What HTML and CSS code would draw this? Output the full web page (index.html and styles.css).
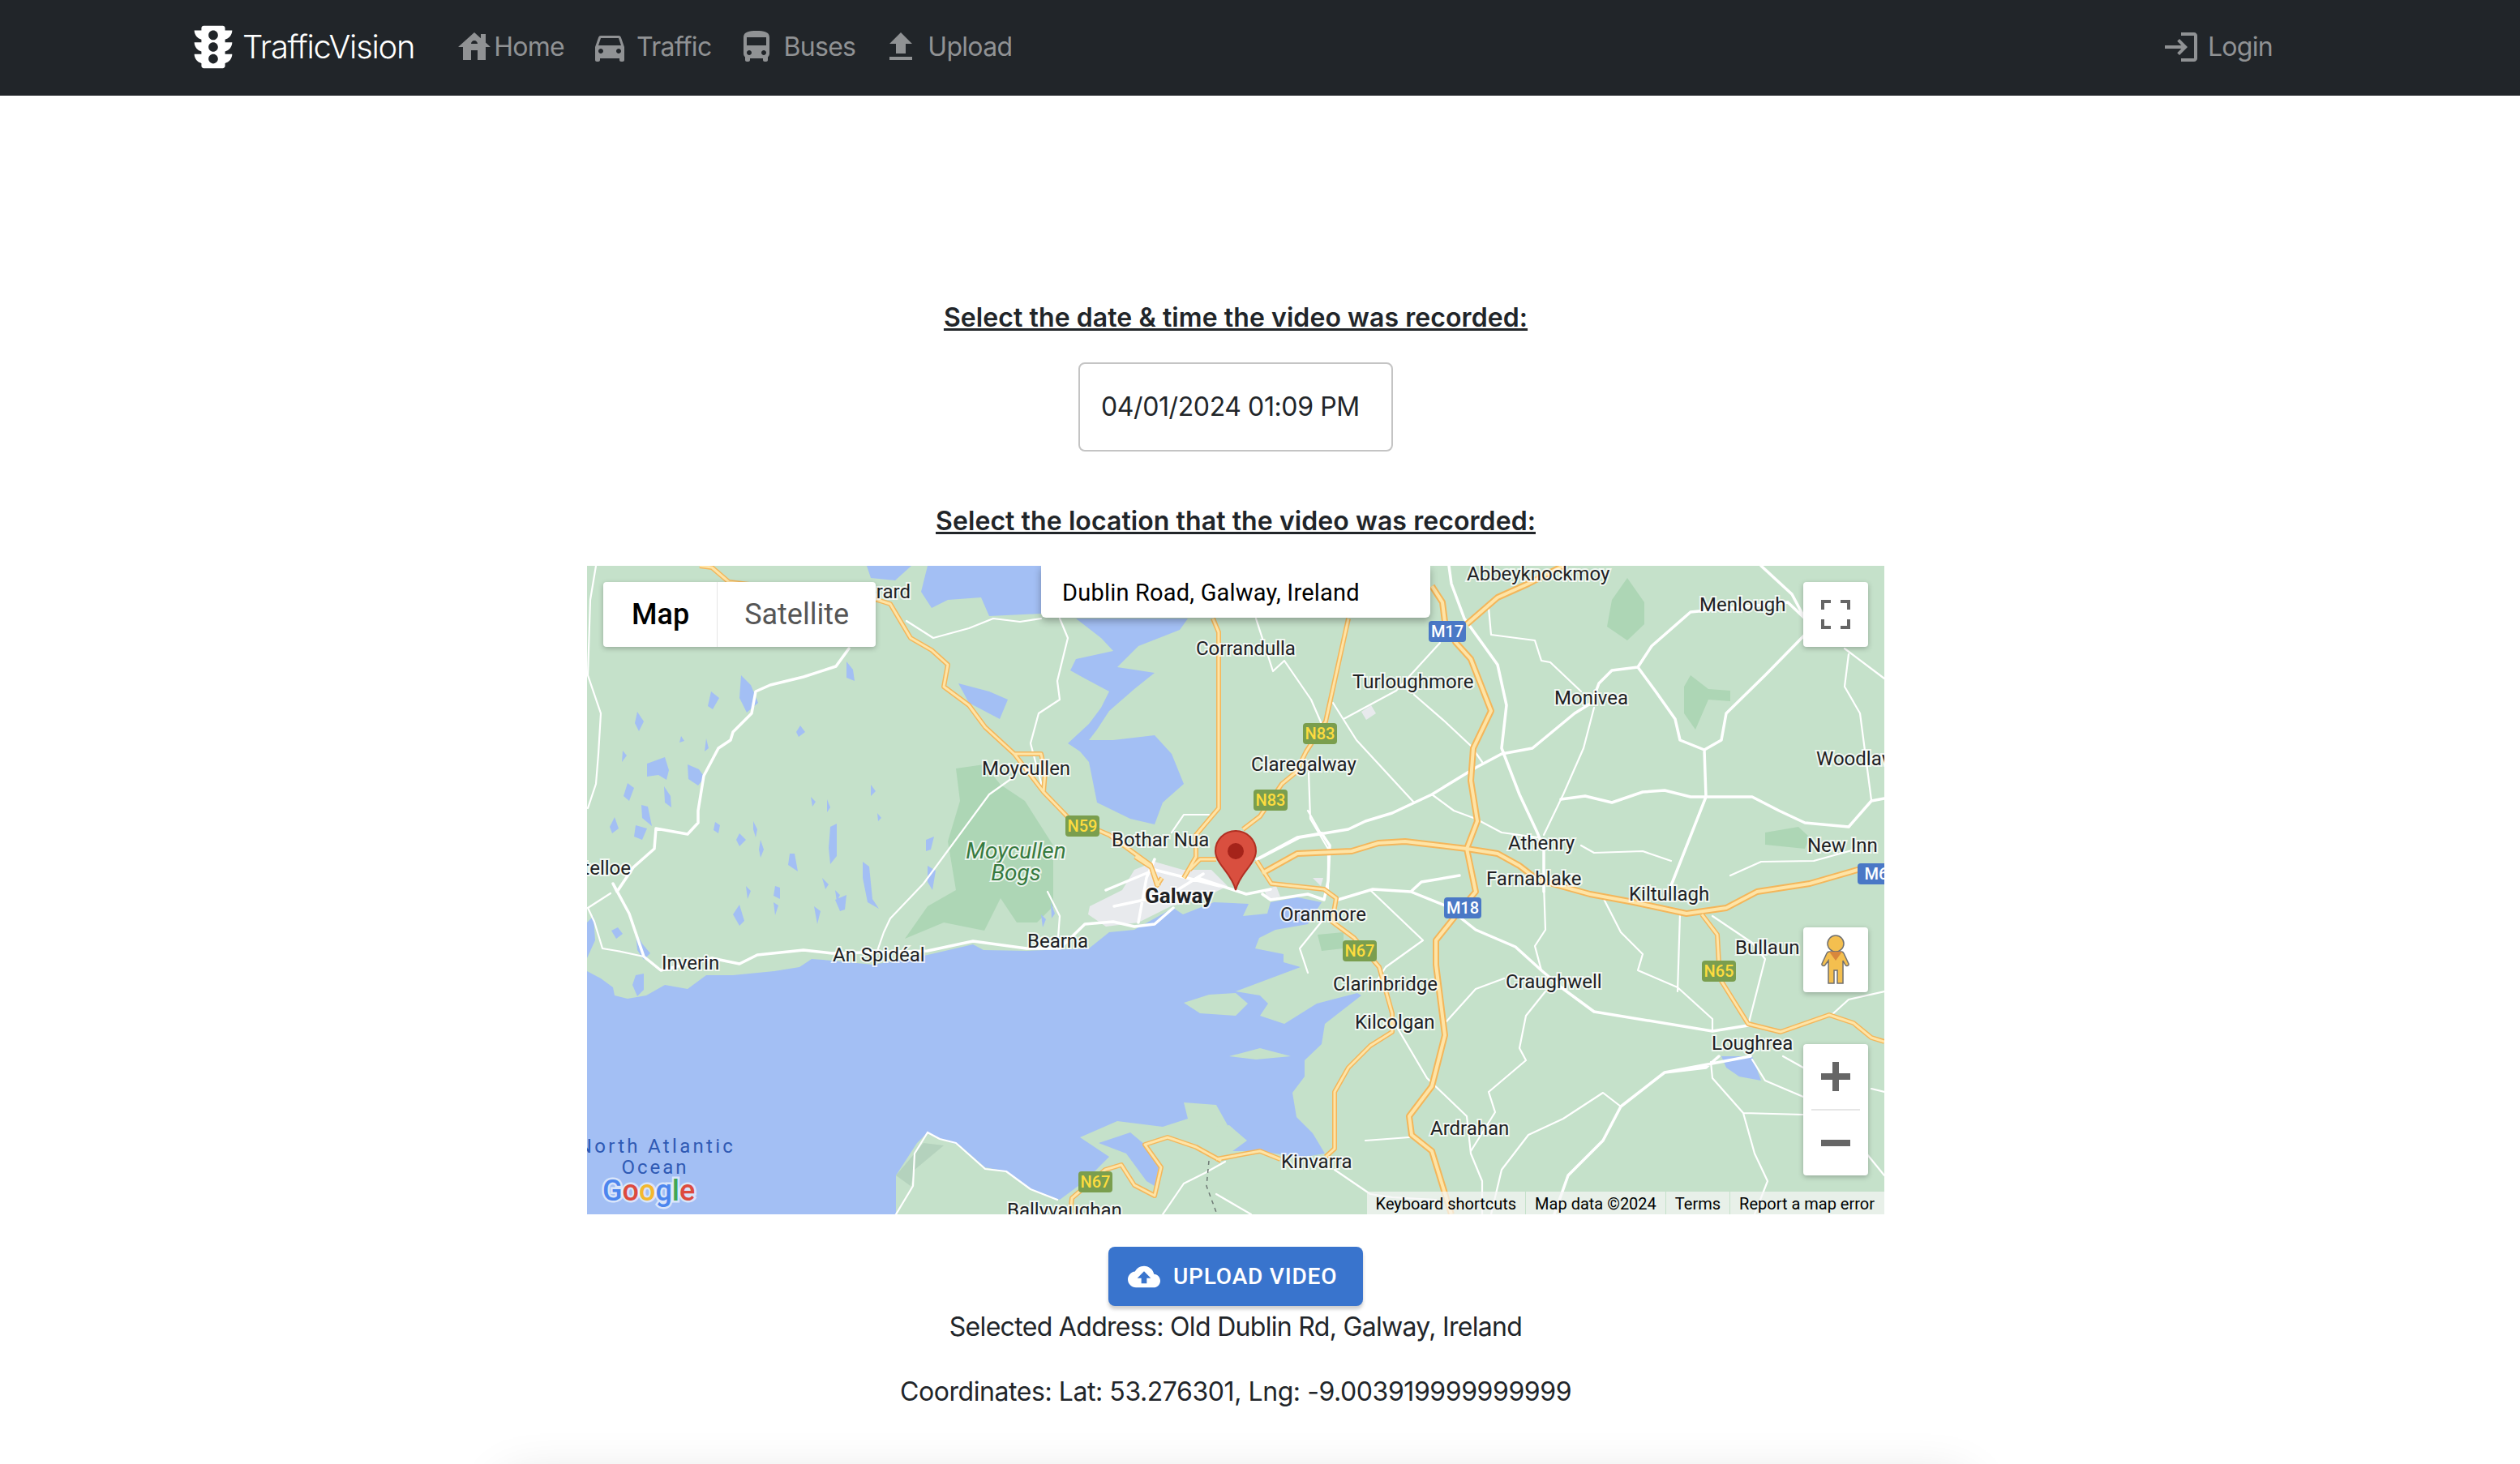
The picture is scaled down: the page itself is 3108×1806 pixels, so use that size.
FILE: index.html
```html
<!DOCTYPE html>
<html lang="en">

<head>
    <meta charset="UTF-8">
    <meta name="viewport" content="width=device-width, initial-scale=1.0">
    <title>TrafficVision</title>
    <link rel="stylesheet" href="styles.css">
</head>

<body>
    <nav class="navbar">
        <a class="brand">
            <svg class="brand-icon" viewBox="0 0 24 24"><path d="M20 10h-3V8.860c1.720-.45 3-2 3-3.860h-3V4c0-.55-.45-1-1-1H8c-.55 0-1 .45-1 1v1H4c0 1.860 1.280 3.410 3 3.860V10H4c0 1.860 1.280 3.410 3 3.860V15H4c0 1.860 1.280 3.410 3 3.860V20c0 .55.45 1 1 1h8c.55 0 1-.45 1-1v-1.140c1.720-.45 3-2 3-3.860h-3v-1.140c1.720-.45 3-2 3-3.860zm-8 9c-1.110 0-2-.9-2-2s.89-2 2-2c1.100 0 2 .9 2 2s-.89 2-2 2zm0-5c-1.110 0-2-.9-2-2s.89-2 2-2c1.100 0 2 .9 2 2s-.89 2-2 2zm0-5c-1.110 0-2-.9-2-2 0-1.110.89-2 2-2 1.100 0 2 .89 2 2 0 1.100-.89 2-2 2z"/></svg>
            <span>TrafficVision</span>
        </a>
        <div class="nav-links">
            <a class="nav-link nav-home">
                <svg class="nav-icon" viewBox="0 0 24 24"><path d="M19 9.300V4h-3v2.600L12 3 2 12h3v8h5v-6h4v6h5v-8h3l-3-2.700zm-9 .7c0-1.100.9-2 2-2s2 .9 2 2h-4z"/></svg>
                Home
            </a>
            <a class="nav-link">
                <svg class="nav-icon" viewBox="0 0 24 24"><path d="M18.920 6.010C18.720 5.420 18.160 5 17.500 5h-11c-.66 0-1.210.42-1.420 1.010L3 12v8c0 .55.45 1 1 1h1c.55 0 1-.45 1-1v-1h12v1c0 .55.45 1 1 1h1c.55 0 1-.45 1-1v-8l-2.080-5.990zM6.500 16c-.83 0-1.500-.67-1.500-1.500S5.670 13 6.500 13s1.500.67 1.500 1.500S7.330 16 6.500 16zm11 0c-.83 0-1.500-.67-1.500-1.500s.67-1.500 1.500-1.500 1.500.67 1.500 1.500-.67 1.500-1.500 1.500zM5 11l1.500-4.500h11L19 11H5z"/></svg>
                Traffic
            </a>
            <a class="nav-link">
                <svg class="nav-icon" viewBox="0 0 24 24"><path d="M4 16c0 .88.39 1.670 1 2.220V20c0 .55.45 1 1 1h1c.55 0 1-.45 1-1v-1h8v1c0 .55.45 1 1 1h1c.55 0 1-.45 1-1v-1.780c.61-.55 1-1.340 1-2.220V6c0-3.500-3.580-4-8-4s-8 .5-8 4v10zm3.500 1c-.83 0-1.500-.67-1.500-1.500S6.670 14 7.500 14s1.500.67 1.500 1.500S8.330 17 7.500 17zm9 0c-.83 0-1.500-.67-1.500-1.500s.67-1.500 1.500-1.500 1.500.67 1.500 1.500-.67 1.500-1.500 1.500zm1.500-6H6V6h12v5z"/></svg>
                Buses
            </a>
            <a class="nav-link">
                <svg class="nav-icon" viewBox="0 0 24 24"><path d="M9 16h6v-6h4l-7-7-7 7h4zm-4 2h14v2H5z"/></svg>
                Upload
            </a>
        </div>
        <a class="nav-link nav-login">
            <svg class="nav-icon" viewBox="0 0 24 24"><path d="M11 7 9.600 8.400l2.600 2.600H2v2h10.200l-2.600 2.600L11 17l5-5-5-5zm9 12h-8v2h8c1.100 0 2-.9 2-2V5c0-1.100-.9-2-2-2h-8v2h8v14z"/></svg>
            Login
        </a>
    </nav>

    <main class="content">
        <h2 class="section-title">Select the date &amp; time the video was recorded:</h2>
        <div class="date-box">04/01/2024 01:09 PM</div>
        <h2 class="section-title location-title">Select the location that the video was recorded:</h2>

        <div class="map">
            <svg class="map-canvas" viewBox="0 0 1600 800">
                <defs>
                    <path id="majorRoads" d="M1204 0L1161 22 1123 39 1085 72M1042 25L1055 45 1058 69 1071 94 1090 115 1115 179 1093 225 1090 265 1098 315 1085 349 1096 402 1071 432 1047 462 1047 492 1058 579 1042 642 1014 679 1017 702 1042 722 1066 800M833 379L876 355 943 352 976 342 1009 340 1085 349 1123 355 1150 370 1172 387 1237 405 1291 415 1356 429 1405 422 1443 402 1508 392 1567 375 1600 374"/>
                    <path id="minorRoads" d="M139 0L154 2 175 20 358 42 374 47 399 89 425 104 445 122 440 149 471 172 491 199 527 232 563 279 593 310 644 332 695 369 705 395M772 65L779 82 779 299 751 332 751 359 736 385M709 385L703 394 696 372 676 359M939 65L911 192 887 229 874 255 857 269 830 309 809 325M776 362L756 362 743 375M826 364L844 392 909 399 924 410 919 439 946 459 977 495 993 552 993 575 966 592 939 619 922 649 922 719 911 729M776 732L830 722 855 732M782 734L751 717 716 705 688 714 708 742 700 777 675 764 659 739 639 745 598 780 596 800M1375 430L1394 455 1397 509 1432 565 1472 575 1532 554 1562 564 1584 582 1600 587M527 232L560 232 565 255 563 279"/>
                </defs>

                <path class="sea" d="M0 500L17 509 32 520 34 530 50 534 73 530 96 517 124 522 147 505 180 505 231 500 262 495 277 485 302 487 353 492 420 480 476 467 489 474 542 475 619 472 644 452 675 449 723 422 735 430 773 415 816 417 809 432 839 429 843 415 876 409 906 415 889 442 849 449 829 459 824 472 859 479 859 489 880 495 840 510 800 525 830 530 840 540 830 555 860 565 900 540 950 527 955 530 910 565 906 590 885 610 885 630 870 650 875 680 895 700 910 725 880 730 830 722 795 722 782 712 790 690 776 665 736 662 741 682 710 692 654 685 608 705 644 729 614 759 583 782 547 769 517 747 491 742 460 715 435 707 420 699 407 712 381 752 381 800 0 800Z"/>
                <path class="land" d="M736 539L767 529 800 527 815 540 800 555 756 552ZM792 605L830 595 868 605 825 609ZM776 692L792 690 814 709 792 725 776 722Z"/>
                <path class="sea" d="M631 712L665 725 690 759 700 765 705 742 688 714 670 699Z"/>
                <path class="hill" d="M381 752L415 712 440 715 404 745 399 765Z"/>

                <path class="wetland" d="M455 250L490 245 510 270 540 290 575 345 575 420 555 440 530 440 510 410 490 450 440 440 392 460 420 420 455 400 445 340 460 290ZM1283 15L1304 45 1304 72 1283 92 1258 75 1264 42ZM1361 135L1383 152 1410 154 1410 167 1383 165 1367 202 1353 182 1353 149ZM1453 329L1494 322 1508 335 1502 349 1453 344ZM901 455L933 452 933 472 906 475Z"/>

                <path class="sea" d="M420 0L560 0 560 59 496 62 486 39 445 42 425 52 412 32ZM603 65L741 65 731 79 680 99 654 125 700 132 675 152 644 179 629 202 619 215 649 215 700 209 721 232 736 269 710 292 700 319 670 312 629 292 619 242 608 229 593 219 619 195 634 175 644 155 614 139 596 129 603 115 649 105 634 89ZM458 145L496 155 519 165 509 189 471 169ZM345 0L400 0 380 18 350 15ZM1399 605L1437 605 1448 635 1421 630 1405 619Z"/>
                <path class="sea" d="M190 135l12 12 9 22-14 12-9-18zM153 155l10 8-8 14-6-4zM62 180l8 12-6 12-5-10zM263 197l6 8-8 6-3-6zM320 118l8 10 2 14-10-4zM116 210l4 6-6 2zM147 213l3 12-5 4zM44 228l5 6-6 8zM74 244l22 -8 5 16-3 12-10-6-14 2zM124 245l14 6 7 10-8 10-12-8zM50 268l8 6-6 16-7-6zM95 272l8 12 1 14-8-6zM67 295l8 2 5 24-12-10zM34 310l5 14-8 6-3-8zM60 320l14 4-6 14-10-4zM158 316l6 4-2 10-6-4zM188 330l8 8-8 8-4-8zM214 338l4 12-4 10-2-10zM205 315l5 10-2 10-3-10zM300 322l8-4 0 40-8 10-2-20zM296 288l4 10-4 6zM276 285l6 6-4 6zM250 355l6 0 4 22-12-8zM340 365l8 6 4 40 8 12-14-8-6-30zM418 338l10-4-4 16-6 2zM420 370l10 6-4 24-6-10zM350 270l6 8-6 6zM358 305l5 6-4 4zM290 385l8 8-4 6zM306 400l6 6-4 8zM232 395l6 2 0 14-8-4zM196 395l6 6-4 10zM0 440l8-8 2 30-10 22zM30 450l8-4 6 8-8 6zM60 452l8 14 10 12-8 8-8-12zM180 430l8-12 6 20-6 6zM230 415l6 4-4 12zM280 420l8 6-4 16zM306 412l14-6-2 18-6 2zM560 430l6 6-4 10zM572 415l5 14-4 6zM60 505l10-2 0 20-8 8-6-14z"/>

                <path class="urban" d="M618 430L620 420 660 400 675 375 700 365 735 375 770 375 790 395 760 410 720 420 680 440 640 445ZM835 400L850 395 855 408 840 412ZM895 385L908 385 905 395ZM955 180L967 172 973 182 961 190Z"/>

                <g class="roads-white">
                    <path d="M11 0L4 42 1 135 17 182 14 232 11 269 1 299M394 68L427 89 471 77 501 65 534 69 560 65M583 65L593 89 580 142 583 165 557 182 547 219 555 249 563 279M527 260L496 282 415 392 374 435 366 452 358 475M568 402L583 432 580 472M721 329L736 307 767 307M70 482L37 475 19 472 9 439 1 422 29 404M420 699L404 725 402 765 381 800M710 800L736 762 762 749 787 735M825 65L846 130 860 117 893 165 906 195M920 169L949 215 1020 292M933 189L998 154 1052 95M1020 159L1058 192 1090 222 1104 242M890 255L892 312 914 349 914 402M1042 282L1069 302 1096 312 1128 329 1172 335M1226 345L1242 354 1302 352 1337 364M1410 382L1448 365 1513 364 1567 349M1112 52L1115 85 1169 92 1177 117 1188 119 1226 155M1242 175L1229 225 1204 282 1180 332M1556 109L1551 149 1570 182 1584 289M1551 102L1600 139M966 400L1031 462 985 495 966 525M1180 392L1182 449 1169 469 1177 499M1253 409L1275 452 1302 479 1296 499 1345 520 1388 559 1388 574M1348 429L1345 525M1388 432L1437 465 1453 485 1432 567M1535 554L1556 535 1600 525M1182 525L1158 555 1150 595 1158 610 1112 649 1120 674 1090 722M1131 509L1096 522 1060 562M993 559L1036 632 1085 679 1090 725 1104 759 1104 800M1275 667L1253 650 1204 682 1161 702 1128 745 1115 800M1386 612L1388 632 1426 675 1500 677M1437 609L1453 635 1500 655M1426 675L1440 725 1456 759 1440 800M776 775L819 800M922 745L966 775 993 779 1047 782M960 709L1014 705M1475 605L1500 619M1584 645L1600 649M1578 725L1600 752M420 699L435 707 455 712 491 744 517 747 547 769 580 782M889 302L906 332M909 435L879 472 889 502"/>
                </g>
                <g class="roads-white wide">
                    <path d="M323 102L307 124 267 137 226 147 208 155 203 182 180 205 177 215 162 225 144 259 137 302 137 317 124 331 85 324 83 349 57 372 37 402 32 392 52 429 70 482 91 499 154 484 188 491 210 480 267 474 302 478 420 475 476 463 542 472 583 472 614 442 649 439 675 445 700 442 723 422M1063 0L1066 22 1082 65 1123 122 1134 172 1128 225 1150 282 1172 329 1180 349 1180 402M1448 0L1486 35 1502 65 1481 45 1361 57 1313 99 1296 125 1264 129 1248 145 1239 169 1218 182 1166 225 1128 232 1096 249 1042 282 993 305 960 315 939 325 879 335 827 362M1296 125L1318 155 1342 189 1348 215 1378 227 1399 215 1405 182 1453 135 1502 85M1378 227L1380 285 1334 402M1201 288L1231 284 1264 292 1302 279 1329 277 1361 285 1380 285 1437 285 1470 302 1502 317 1556 322 1584 290 1600 287M926 412L969 399 1016 402 1058 419 1096 449 1145 470 1177 499 1204 522 1242 550 1388 574 1432 567M1435 605L1329 625 1275 667 1253 709 1210 752 1193 800M1329 625L1380 619 1396 605M753 385L813 405 843 399M826 362L876 335 906 330 916 345 914 389 909 412M1016 402L1029 390 1076 382M833 405L843 412 889 405 909 412M640 400L700 375 780 395M680 440L690 385 700 362M650 420L720 405 760 380"/>
                </g>

                <use href="#minorRoads" class="road-casing"/>
                <use href="#majorRoads" class="road-casing major"/>
                <use href="#minorRoads" class="road-fill"/>
                <use href="#majorRoads" class="road-fill major"/>
                <path class="ferry" d="M767 734L764 765 777 800"/>

                <g class="shield green">
                    <rect x="883" y="194" width="42" height="26" rx="4"/><text x="904" y="214">N83</text>
                    <rect x="822" y="276" width="42" height="26" rx="4"/><text x="843" y="296">N83</text>
                    <rect x="590" y="308" width="42" height="26" rx="4"/><text x="611" y="328">N59</text>
                    <rect x="932" y="462" width="42" height="26" rx="4"/><text x="953" y="482">N67</text>
                    <rect x="1375" y="487" width="42" height="26" rx="4"/><text x="1396" y="507">N65</text>
                    <rect x="606" y="747" width="42" height="26" rx="4"/><text x="627" y="767">N67</text>
                </g>
                <g class="shield blue">
                    <rect x="1038" y="68" width="46" height="26" rx="4"/><text x="1061" y="88">M17</text>
                    <rect x="1057" y="409" width="46" height="26" rx="4"/><text x="1080" y="429">M18</text>
                    <rect x="1567" y="367" width="46" height="26" rx="4"/><text x="1590" y="387">M6</text>
                </g>

                <g class="map-labels" transform="translate(0 1)">
                    <text x="1085" y="17">Abbeyknockmoy</text>
                    <text x="1372" y="55">Menlough</text>
                    <text x="944" y="150">Turloughmore</text>
                    <text x="1193" y="170">Monivea</text>
                    <text x="1516" y="245">Woodlawn</text>
                    <text x="819" y="252">Claregalway</text>
                    <text x="1136" y="349">Athenry</text>
                    <text x="1505" y="352">New Inn</text>
                    <text x="1109" y="393">Farnablake</text>
                    <text x="751" y="109">Corrandulla</text>
                    <text x="399" y="39" class="end">Oughterard</text>
                    <text x="487" y="257">Moycullen</text>
                    <text x="647" y="345">Bothar Nua</text>
                    <text x="54" y="380" class="end">Costelloe</text>
                    <text x="92" y="497">Inverin</text>
                    <text x="303" y="487">An Spidéal</text>
                    <text x="543" y="470">Bearna</text>
                    <text x="855" y="437">Oranmore</text>
                    <text x="920" y="523">Clarinbridge</text>
                    <text x="947" y="570">Kilcolgan</text>
                    <text x="1133" y="520">Craughwell</text>
                    <text x="1285" y="412">Kiltullagh</text>
                    <text x="1416" y="478">Bullaun</text>
                    <text x="1387" y="596">Loughrea</text>
                    <text x="1040" y="701">Ardrahan</text>
                    <text x="856" y="742">Kinvarra</text>
                    <text x="518" y="802">Ballyvaughan</text>
                    <text x="688" y="415" class="city">Galway</text>
                    <text x="529" y="360" class="park">Moycullen</text>
                    <text x="529" y="387" class="park">Bogs</text>
                    <text x="86" y="723" class="ocean wide-ocean">North Atlantic</text>
                    <text x="84" y="749" class="ocean">Ocean</text>
                </g>

                <text class="google-logo" x="19" y="783"><tspan class="g-blue">G</tspan><tspan class="g-red">o</tspan><tspan class="g-yellow">o</tspan><tspan class="g-blue">g</tspan><tspan class="g-green">l</tspan><tspan class="g-red">e</tspan></text>

                <path class="pin" d="M800 400C796 384 786 376 780 366 776 360 775 356 775 352 775 338 786 327 800 327 814 327 825 338 825 352 825 356 824 360 820 366 814 376 804 384 800 400Z"/>
                <circle class="pin-dot" cx="800" cy="352" r="10"/>
            </svg>

            <div class="map-type">
                <span class="map-type-btn active">Map</span>
                <span class="map-type-btn">Satellite</span>
            </div>
            <div class="map-search">Dublin Road, Galway, Ireland</div>
            <div class="map-btn fullscreen-btn">
                <svg viewBox="0 0 80 80"><path d="M22 22h12v4h-8v8h-4zM46 22h12v12h-4v-8h-8zM22 46h4v8h8v4H22zM54 46h4v12H46v-4h8z"/></svg>
            </div>
            <div class="map-btn pegman-btn">
                <svg viewBox="0 0 80 80">
                    <path class="peg-body" d="M33 30h14q2 0 3 2l6 13q.6 2-2 2.500-1.500.2-2.300-1.500L49 41v28h-7V53h-4v16h-7V41l-3.700 5q-.8 1.700-2.300 1.500-2.600-.5-2-2.500l6-13q1-2 3-2z"/>
                    <circle class="peg-body" cx="40" cy="20" r="10"/>
                    <path class="peg-neck" d="M32 30h16l-8 11z"/>
                </svg>
            </div>
            <div class="zoom-control">
                <div class="zoom-btn">
                    <svg viewBox="0 0 80 80"><path d="M36 22h8v14h14v8H44v14h-8V44H22v-8h14z"/></svg>
                </div>
                <div class="zoom-sep"></div>
                <div class="zoom-btn">
                    <svg viewBox="0 0 80 80"><path d="M22 36h36v8H22z"/></svg>
                </div>
            </div>
            <div class="attribution">
                <span>Keyboard shortcuts</span>
                <span>Map data ©2024</span>
                <span>Terms</span>
                <span>Report a map error</span>
            </div>
        </div>

        <button class="upload-btn" type="button">
            <svg viewBox="0 0 24 24"><path d="M19.350 10.040C18.670 6.590 15.640 4 12 4 9.110 4 6.600 5.640 5.350 8.040 2.340 8.360 0 10.910 0 14c0 3.310 2.690 6 6 6h13c2.760 0 5-2.240 5-5 0-2.640-2.050-4.780-4.650-4.960zM14 13v4h-4v-4H7l5-5 5 5h-3z"/></svg>
            Upload Video
        </button>
        <p class="result address">Selected Address: Old Dublin Rd, Galway, Ireland</p>
        <p class="result coords">Coordinates: Lat: 53.276301, Lng: -9.003919999999999</p>

        <div class="next-card"></div>
    </main>
</body>

</html>
```

FILE: styles.css
```css
* {
    box-sizing: border-box;
}

html,
body {
    margin: 0;
    height: 1806px;
    overflow: hidden;
}

body {
    background-color: #fff;
    color: #212529;
    font-family: "Inter", "Liberation Sans", sans-serif;
    font-size: 32px;
    line-height: 48px;
}

.navbar {
    display: flex;
    align-items: center;
    height: 118px;
    padding: 0 305px 2px 228px;
    background-color: #212529;
    color: #fff;
}

.brand {
    display: flex;
    align-items: center;
    gap: 1px;
    margin-right: 50px;
    font-size: 40px;
    font-weight: 300;
    letter-spacing: -1.300px;
}

.brand-icon {
    width: 70px;
    height: 70px;
    fill: #fff;
}

.nav-links {
    display: flex;
    align-items: center;
    gap: 32px;
}

.nav-link {
    display: flex;
    align-items: center;
    gap: 9px;
    color: #909294;
    letter-spacing: -0.700px;
}

.nav-home {
    gap: 0;
}

.nav-icon {
    width: 48px;
    height: 48px;
    fill: #909294;
}

.nav-login {
    margin-left: auto;
}

.content {
    display: flex;
    flex-direction: column;
    align-items: center;
    width: 3048px;
    height: 1688px;
    padding-top: 250px;
    overflow: hidden;
}

.section-title {
    flex: none;
    margin: 0;
    font-size: 32px;
    font-weight: 600;
    letter-spacing: 0.080px;
    line-height: 48px;
    text-decoration: underline;
}

.location-title {
    margin-top: 62px;
}

.date-box {
    flex: none;
    width: 388px;
    height: 110px;
    margin-top: 31px;
    padding-left: 26px;
    border: 2px solid #c4c4c4;
    border-radius: 8px;
    letter-spacing: -0.400px;
    line-height: 106px;
}

.map {
    position: relative;
    flex: none;
    width: 1600px;
    height: 800px;
    margin-top: 31px;
    overflow: hidden;
    background-color: #c5e1ca;
    font-family: "Roboto", sans-serif;
}

.map-canvas {
    display: block;
    width: 1600px;
    height: 800px;
    fill: none;
}

.sea {
    fill: #a3bff4;
}

.land {
    fill: #c5e1ca;
}

.hill {
    fill: #b4d2bd;
}

.wetland {
    fill: #add6b5;
}

.urban {
    fill: #e8eaed;
}

.roads-white {
    stroke: #fff;
    stroke-width: 2.200;
    stroke-linejoin: round;
    stroke-linecap: round;
}

.roads-white.wide {
    stroke-width: 3.500;
}

.road-casing,
.road-fill {
    fill: none;
    stroke-linejoin: round;
}

.road-casing {
    stroke: #f4b65a;
    stroke-width: 6;
}

.road-casing.major {
    stroke-width: 8;
}

.road-fill {
    stroke: #fee4a6;
    stroke-width: 3;
}

.road-fill.major {
    stroke-width: 4;
}

.ferry {
    stroke: #6f7a75;
    stroke-width: 1.500;
    stroke-dasharray: 5 5;
}

.shield text {
    font-size: 20px;
    font-weight: 500;
    text-anchor: middle;
}

.shield.green rect {
    fill: #7a9e4e;
}

.shield.green text {
    fill: #fddc3f;
}

.shield.blue rect {
    fill: #4a78c6;
}

.shield.blue text {
    fill: #fff;
}

.map-labels text {
    fill: #202124;
    font-size: 24px;
    stroke: rgba(255, 255, 255, 0.75);
    stroke-width: 4px;
    paint-order: stroke;
}

.map-labels .end {
    text-anchor: end;
}

.map-labels .city {
    font-size: 26px;
    font-weight: 700;
}

.map-labels .park {
    fill: #377a3f;
    font-size: 28px;
    font-style: italic;
    text-anchor: middle;
}

.map-labels .ocean {
    fill: #2f5ab4;
    font-size: 24px;
    letter-spacing: 3px;
    stroke: none;
    text-anchor: middle;
}

.map-labels .wide-ocean {
    letter-spacing: 3.300px;
}

.google-logo {
    font-size: 36px;
    font-weight: 500;
    stroke: rgba(255, 255, 255, 0.6);
    stroke-width: 5px;
    paint-order: stroke;
}

.g-blue {
    fill: #4c86ee;
}

.g-red {
    fill: #dd4b3e;
}

.g-yellow {
    fill: #f3b82f;
}

.g-green {
    fill: #3fa757;
}

.pin {
    fill: #d94f3f;
    stroke: #b12f22;
    stroke-width: 2;
}

.pin-dot {
    fill: #a5231a;
}

.map-type {
    position: absolute;
    top: 20px;
    left: 20px;
    display: flex;
    height: 80px;
    border-radius: 4px;
    background-color: #fff;
    box-shadow: 0 2px 6px rgba(0, 0, 0, 0.25);
    color: #565656;
    font-size: 36px;
    line-height: 80px;
}

.map-type-btn {
    padding: 0 33px;
}

.map-type-btn.active {
    padding: 0 34px 0 35px;
    border-right: 1px solid #e6e6e6;
    color: #000;
    font-weight: 500;
}

.map-search {
    position: absolute;
    top: 0;
    left: 560px;
    width: 480px;
    height: 64px;
    padding-left: 26px;
    border-radius: 0 0 6px 6px;
    background-color: #fff;
    box-shadow: 0 4px 10px rgba(0, 0, 0, 0.3);
    color: #000;
    font-size: 29px;
    letter-spacing: 0.200px;
    line-height: 66px;
}

.map-btn {
    position: absolute;
    left: 1500px;
    width: 80px;
    height: 80px;
    border-radius: 4px;
    background-color: #fff;
    box-shadow: 0 2px 6px rgba(0, 0, 0, 0.25);
}

.map-btn svg,
.zoom-btn svg {
    display: block;
    width: 80px;
    height: 80px;
    fill: #666;
}

.fullscreen-btn {
    top: 20px;
}

.pegman-btn {
    top: 446px;
}

.map-btn .peg-body {
    fill: #f4bf4f;
    stroke: #6f6f6f;
    stroke-width: 1.500;
}

.map-btn .peg-neck {
    fill: #d8873c;
}

.zoom-control {
    position: absolute;
    top: 590px;
    left: 1500px;
    width: 80px;
    height: 162px;
    border-radius: 4px;
    background-color: #fff;
    box-shadow: 0 2px 6px rgba(0, 0, 0, 0.25);
}

.zoom-sep {
    width: 60px;
    height: 2px;
    margin: 0 auto;
    background-color: #e6e6e6;
}

.attribution {
    position: absolute;
    right: 0;
    bottom: 0;
    display: flex;
    gap: 1px;
    height: 28px;
    color: #000;
    font-size: 20px;
    line-height: 30px;
}

.attribution span {
    padding: 0 11px;
    background-color: rgba(245, 245, 245, 0.72);
}

.attribution span:last-child {
    padding-right: 12px;
}

.upload-btn {
    display: flex;
    flex: none;
    align-items: center;
    gap: 16px;
    width: 314px;
    height: 73px;
    margin: 40px 0 2px;
    padding: 0 0 0 24px;
    border: 0;
    border-radius: 8px;
    background-color: #3974cd;
    box-shadow: 0 4px 4px rgba(0, 0, 0, 0.2);
    color: #fff;
    font-family: "Roboto", sans-serif;
    font-size: 28px;
    font-weight: 500;
    letter-spacing: 0.8px;
    text-transform: uppercase;
}

.upload-btn svg {
    width: 40px;
    height: 40px;
    fill: #fff;
}

.result {
    flex: none;
    margin: 0 0 32px;
}

.address {
    letter-spacing: -0.690px;
}

.coords {
    letter-spacing: -0.430px;
}

.next-card {
    flex: none;
    width: 1800px;
    height: 400px;
    margin-top: 56px;
    background-color: #fff;
    box-shadow: 0 0 60px rgba(0, 0, 0, 0.16);
}
```
